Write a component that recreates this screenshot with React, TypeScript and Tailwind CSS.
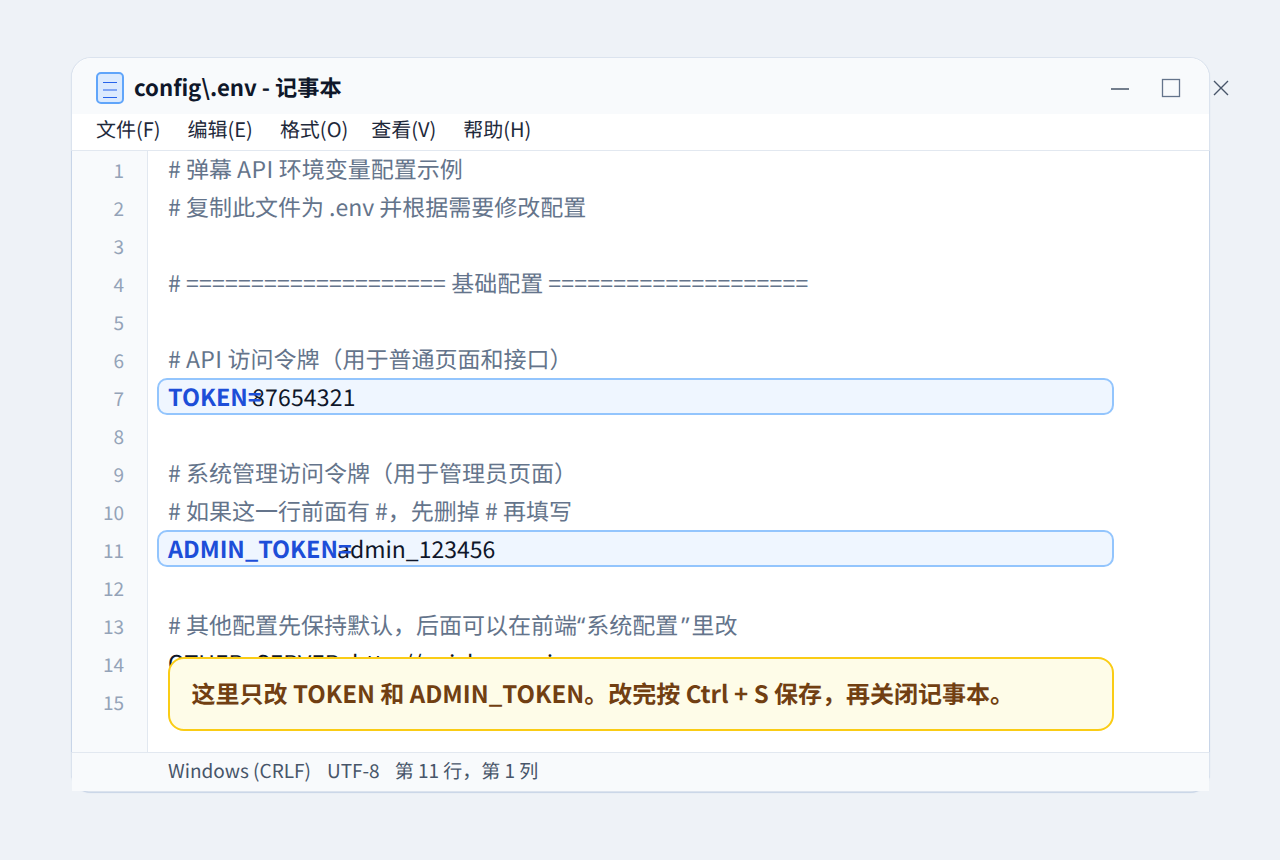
const FONT = "font-['Noto_Sans_CJK_SC','Noto_Sans',sans-serif]";
const LINE = "h-[38px] pl-5 text-[23px] leading-[34px] whitespace-pre";

const lines: [number, React.ReactNode][] = [
  [1, <># 弹幕 <span className="tracking-[0.4px]">API</span> 环境变量配置示例</>],
  [2, "# 复制此文件为 .env 并根据需要修改配置"],
  [3, ""],
  [
    4,
    <>
      # <span className="tracking-[0.24px]">====================</span> 基础配置{" "}
      <span className="tracking-[0.24px]">====================</span>
    </>,
  ],
  [5, ""],
  [6, <># <span className="tracking-[0.4px]">API</span> 访问令牌（用于普通页面和接口）</>],
  [7, ""],
  [8, ""],
  [9, "# 系统管理访问令牌（用于管理员页面）"],
  [10, "# 如果这一行前面有 #，先删掉 # 再填写"],
  [11, ""],
  [12, ""],
  [
    13,
    <>
      # 其他配置先保持默认，后面可以在前端<span className="font-['Noto_Sans'] pr-px">“</span>系统配置
      <span className="font-['Noto_Sans'] pl-[3px] pr-[2px]">”</span>里改
    </>,
  ],
  [14, ""],
  [15, ""],
];

function KeyLine({ k, v, w, t }: { k: string; v: string; w: string; t: string }) {
  return (
    <div className={`relative ${LINE} text-[#0f172a]`}>
      <div className="absolute left-[9px] -top-px w-[957px] h-[37px] rounded-[10px] border-[2.5px] border-[#93c5fd] bg-[#eff6ff]" />
      <span className={`relative inline-block ${w}`} />
      <span className={`relative ${t}`}>{v}</span>
      <span className="absolute left-5 top-0 text-[23.4px] font-bold text-[#1d4ed8]">{k}</span>
    </div>
  );
}

export default function App() {
  return (
    <div className={`min-h-[860px] bg-[#eef2f7] pt-[57px] pl-[71px] [text-rendering:geometricPrecision] ${FONT}`}>
      <div className="relative w-[1139px] h-[735px] rounded-[20px] border border-[#dbe3ee] bg-white shadow-[0_1px_1px_#c7d4e6]">
        {/* title bar */}
        <div className="h-[56px] rounded-t-[20px] bg-[#f8fafc] flex items-center pl-6 pr-0">
          <svg width="28" height="32" viewBox="0 0 28 32" className="mt-[3px]">
            <rect x="1" y="1" width="26" height="30" rx="4" fill="#dbeafe" stroke="#60a5fa" strokeWidth="2" />
            <path d="M7 10.5H21M7 18H21M7 25.5H21" stroke="#2563eb" strokeWidth="1" />
          </svg>
          <span className="ml-[10px] mt-[2px] text-[22.2px] font-bold leading-none text-[#0f172a]">config\.env - 记事本</span>
          <div className="ml-auto flex items-center h-full">
            <svg width="20" height="20" viewBox="0 0 20 20" className="mr-[32px] mt-[3px]">
              <path d="M1 11H19" stroke="#475569" strokeWidth="1.5" />
            </svg>
            <svg width="20" height="20" viewBox="0 0 20 20" className="mr-[31px] mt-[3px] -ml-[1px]">
              <rect x="1.5" y="1.5" width="17" height="17" fill="none" stroke="#64748b" strokeWidth="1.3" />
            </svg>
            <svg width="18" height="18" viewBox="0 0 18 18" className="mr-[-21px] mt-[3px]">
              <path d="M2 2L16 16M16 2L2 16" stroke="#475569" strokeWidth="1.4" />
            </svg>
          </div>
        </div>
        {/* menu */}
        <div className="relative h-[37px] flex items-center border-b border-[#e2e8f0] bg-white text-[20px] leading-none text-[#1e293b]">
          <span className="ml-6 -mt-[7px]">文件(F)</span>
          <span className="ml-[27px] -mt-[7px]">编辑(E)</span>
          <span className="ml-[27px] -mt-[7px]">格式(O)</span>
          <span className="ml-[23px] -mt-[7px]">查看(V)</span>
          <span className="ml-[27px] -mt-[7px]">帮助(H)</span>
        </div>
        {/* body */}
        <div className="relative flex h-[601px] -mx-px border-x border-[#c8d5e8]">
          <div className="w-[76px] shrink-0 border-r border-[#e2e8f0] bg-[#f8fafc]">
            {lines.map(([n]) => (
              <div key={n} className="h-[38px] pr-[23px] pt-px text-right text-[19px] leading-[38px] text-[#94a3b8]">
                {n}
              </div>
            ))}
          </div>
          <div className="flex-1">
            {lines.map(([n, t]) =>
              n === 7 ? (
                <KeyLine key={n} k="TOKEN=" v="87654321" w="w-[84px]" t="tracking-[0.2px]" />
              ) : n === 11 ? (
                <KeyLine key={n} k="ADMIN_TOKEN=" v="admin_123456" w="w-[169px]" t="tracking-[0px]" />
              ) : n === 14 ? (
                <div key={n} className={`${LINE} text-[#0f172a]`}>
                  OTHER_SERVER=http://quickgo:main
                </div>
              ) : (
                <div key={n} className={`${LINE} text-[#64748b]`}>
                  {t}
                </div>
              )
            )}
          </div>
          <div className="absolute left-[96px] top-[506px] w-[946px] h-[74px] rounded-[16px] border-[2.5px] border-[#facc15] bg-[#fefce8] flex items-center pl-[21.5px] pb-[3px] text-[24px] font-bold leading-none text-[#713f12]">
            这里只改 TOKEN 和 ADMIN_TOKEN。改完按 Ctrl + S 保存，再关闭记事本。
          </div>
        </div>
        {/* status */}
        <div className="h-[39px] border-t border-[#e2e8f0] bg-[#f8fafc] flex items-center pl-[96px] text-[19px] leading-none text-[#475569]">
          <span className="-mt-[3px]">Windows (CRLF)</span>
          <span className="ml-4 -mt-[3px]">UTF-8</span>
          <span className="ml-[15px] -mt-[3px]">第 11 行，第 1 列</span>
        </div>
      </div>
    </div>
  );
}
